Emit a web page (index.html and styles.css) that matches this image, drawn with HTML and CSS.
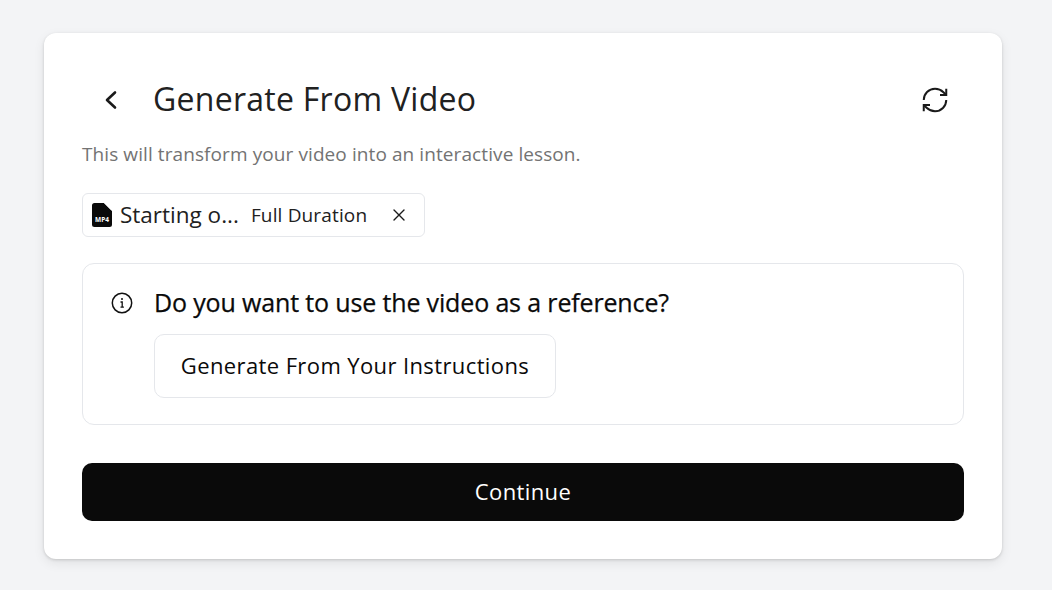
FILE: index.html
```html
<!DOCTYPE html>
<html lang="en">
<head>
<meta charset="utf-8">
<title>Generate From Video</title>
<link rel="stylesheet" href="styles.css">
</head>
<body>
<main class="card">
  <header class="head">
    <button class="back" aria-label="Back">
      <svg width="24" height="24" viewBox="0 0 24 24" fill="none" stroke="#1a1a1a" stroke-width="2.600" stroke-linecap="round" stroke-linejoin="round"><path d="M16 4.500 8 12l8 7.500"/></svg>
    </button>
    <h1 class="title">Generate From Video</h1>
    <button class="refresh" aria-label="Regenerate">
      <svg width="30" height="30" viewBox="0 0 24 24" fill="none" stroke="#1a1a1a" stroke-width="1.600" stroke-linecap="butt" stroke-linejoin="miter"><path d="M3 12a9 9 0 0 1 9-9 9.750 9.750 0 0 1 6.740 2.740L21 8"/><path d="M21 3v5h-5"/><path d="M21 12a9 9 0 0 1-9 9 9.750 9.750 0 0 1-6.740-2.740L3 16"/><path d="M8 16H3v5"/></svg>
    </button>
  </header>
  <p class="sub">This will transform your video into an interactive lesson.</p>
  <div class="chip">
    <svg class="file" width="20" height="24" viewBox="0 0 20 24"><path d="M2.500 0H12l8 8v13.500a2.500 2.500 0 0 1-2.500 2.500h-15A2.500 2.500 0 0 1 0 21.500v-19A2.500 2.500 0 0 1 2.500 0z" fill="#0a0a0a"/><path d="M12.500 0l7.500 7.500" stroke="#fff" stroke-width="1" fill="none"/><text x="10" y="19" text-anchor="middle" class="filetext">MP4</text></svg>
    <span class="name">Starting o...</span>
    <span class="dur">Full Duration</span>
    <svg class="x" width="12" height="12" viewBox="0 0 12 12" fill="none" stroke="#1a1a1a" stroke-width="1.400" stroke-linecap="round"><path d="M1 1l10 10M11 1 1 11"/></svg>
  </div>
  <section class="box">
    <svg class="info" width="22" height="22" viewBox="0 0 22 22" fill="none" stroke="#111" stroke-width="1.500"><circle cx="11" cy="11" r="9.700"/><path d="M9.500 10h1.700v5M9.500 15.200h3.400" stroke-width="1.300"/><circle cx="11" cy="7" r="1" fill="#111" stroke="none"/></svg>
    <div class="q">
      <h2 class="qt">Do you want to use the video as a reference?</h2>
      <button class="opt">Generate From Your Instructions</button>
    </div>
  </section>
  <button class="cta">Continue</button>
</main>
</body>
</html>
```
FILE: styles.css
```css
* { box-sizing: border-box; }
html, body { margin: 0; height: 100%; }
body {
  background: #f3f4f6;
  font-family: "Open Sans", sans-serif;
  padding: 33px 50px 31px 44px;
}
button { font: inherit; background: none; border: 0; padding: 0; color: inherit; }
.card {
  width: 958px;
  height: 526px;
  background: #fff;
  border-radius: 12px;
  box-shadow: 0 4px 12px rgba(0,0,0,.08), 0 1px 3px rgba(0,0,0,.15);
  padding: 0 38px;
  display: flex;
  flex-direction: column;
}
.head { display: flex; align-items: center; height: 44px; margin-top: 45px; }
.back { width: 24px; height: 24px; margin-left: 17px; display: flex; }
.title { font-size: 32px; font-weight: 400; color: #212121; margin: 0 0 2px 30px; line-height: 42px; flex: 1; letter-spacing: .27px; }
.refresh { width: 30px; height: 30px; margin-right: 14px; display: flex; }
.sub { font-size: 19px; line-height: 26px; color: #737373; margin: 19px 0 0; letter-spacing: .09px; }
.chip {
  align-self: flex-start;
  display: flex; align-items: center;
  margin-top: 26px;
  width: 343px; height: 44px;
  border: 1px solid #e5e7eb;
  border-radius: 6px;
  padding: 0 0 2px 9px;
}
.file { flex: none; margin-top: 2px; }
.filetext { font-size: 6.500px; font-weight: 700; fill: #fff; font-family: "Open Sans", sans-serif; }
.name { font-size: 22.500px; color: #212121; margin-left: 8px; white-space: nowrap; }
.dur { font-size: 19px; color: #212121; margin: 2px 0 0 12px; white-space: nowrap; letter-spacing: .15px; }
.x { margin-left: 26px; flex: none; margin-top: 2px; }
.box {
  display: flex;
  margin-top: 26px;
  height: 162px;
  border: 1px solid #e5e7eb;
  border-radius: 12px;
  padding: 24px 0 0 28px;
}
.info { flex: none; margin-top: 4px; }
.q { margin-left: 21px; }
.qt { font-size: 25px; font-weight: 500; color: #0a0a0a; line-height: 28px; margin: 0; letter-spacing: -.15px; -webkit-text-stroke: .25px #0a0a0a; }
.opt {
  display: block;
  margin-top: 18px;
  width: 402px; height: 64px;
  border: 1px solid #e5e7eb;
  border-radius: 10px;
  font-size: 22px;
  color: #0a0a0a;
  letter-spacing: .39px;
  padding-bottom: 2px;
}
.cta {
  margin-top: 38px;
  height: 58px;
  background: #0a0a0a;
  color: #fff;
  border-radius: 10px;
  font-size: 22px;
  letter-spacing: .4px;
  padding-bottom: 2px;
}
```
